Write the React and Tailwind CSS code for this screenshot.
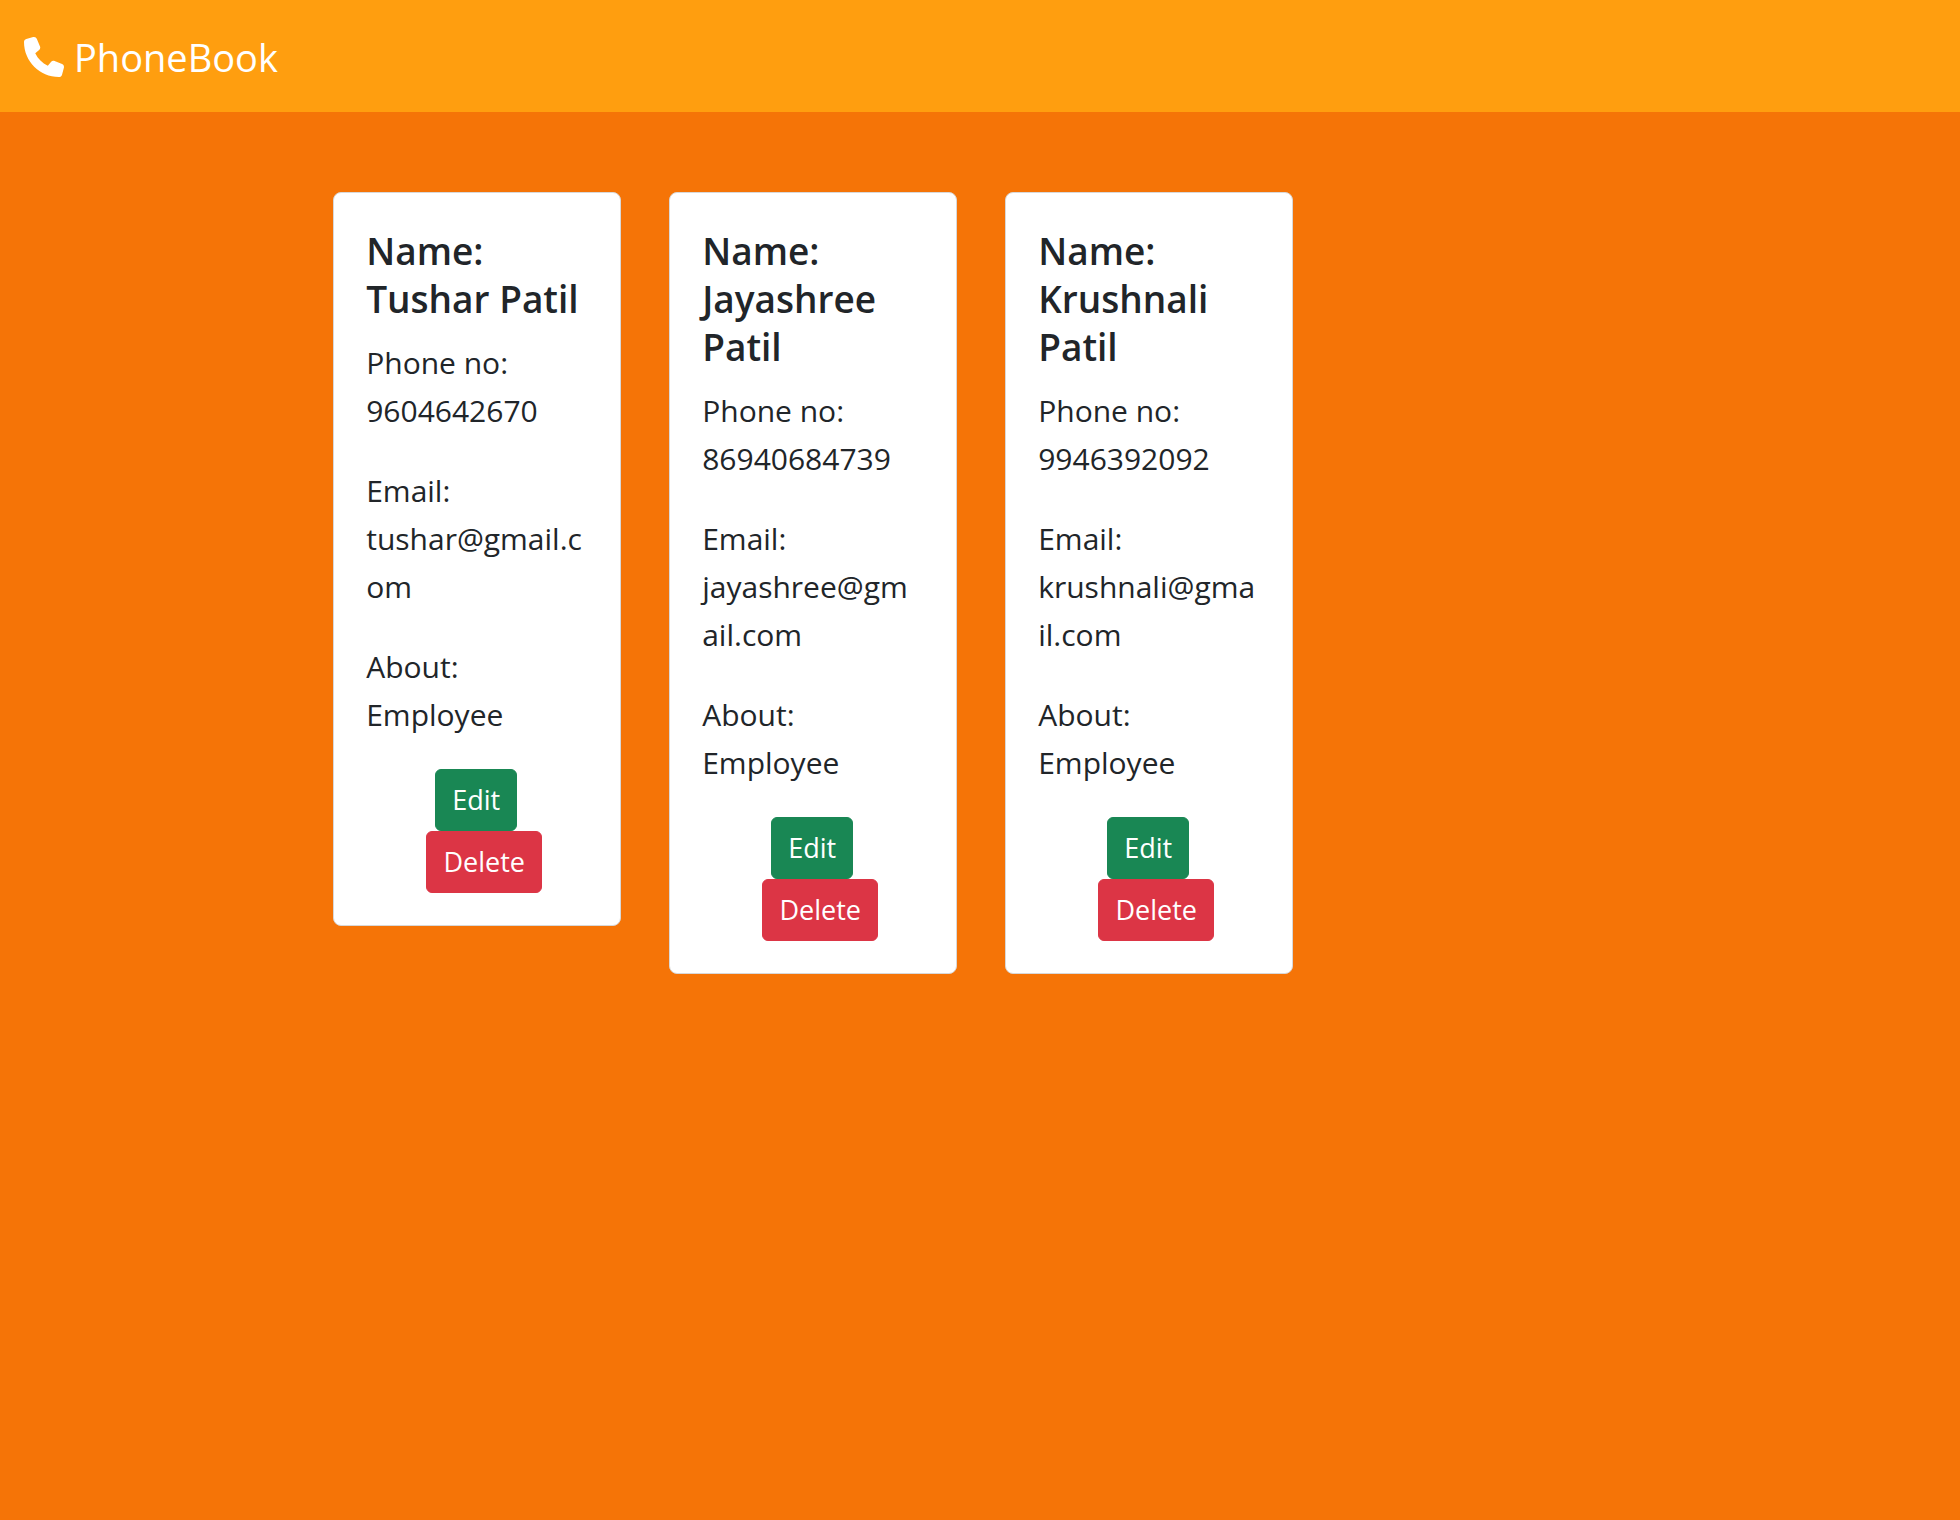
import { FaPhone } from "react-icons/fa6";

const contacts = [
  { name: "Tushar Patil", phone: "9604642670", email: "tushar@gmail.com", about: "Employee" },
  { name: "Jayashree Patil", phone: "86940684739", email: "jayashree@gmail.com", about: "Employee" },
  { name: "Krushnali Patil", phone: "9946392092", email: "krushnali@gmail.com", about: "Employee" },
];

function ContactCard({ name, phone, email, about }) {
  return (
    <article className="w-72 rounded-lg border border-[#d8d8d8] bg-white px-8 pt-[34px] pb-8 text-[#212529]">
      <h2 className="mb-4 text-[37px] leading-12 font-semibold">
        Name: <br />
        {name}
      </h2>
      <div className="space-y-8 text-[30px] leading-12 wrap-anywhere">
        <p>
          Phone no: <br />
          {phone}
        </p>
        <p>
          Email: <br />
          {email}
        </p>
        <p>
          About: <br />
          {about}
        </p>
      </div>
      <div className="mt-[30px] mr-0.5 flex flex-col items-center text-[27px] leading-[42px] text-white">
        <button type="button" className="rounded-md border border-[#198754] bg-[#198754] px-4 py-[9px]">
          Edit
        </button>
        <button type="button" className="ml-4 rounded-md border border-[#dc3545] bg-[#dc3545] px-4 py-[9px]">
          Delete
        </button>
      </div>
    </article>
  );
}

export default function App() {
  return (
    <div className="min-h-screen bg-[#f57407] font-['Open_Sans','Noto_Sans',sans-serif]">
      <nav className="flex h-28 items-center bg-[#ff9e0f] px-6 pt-0.5">
        <a href="#" className="flex items-center gap-2.5 text-[38px] leading-[60px] text-white">
          <FaPhone className="size-10" aria-hidden="true" />
          PhoneBook
        </a>
      </nav>
      <main className="flex flex-wrap items-start gap-12 pt-20 pl-[17%]">
        {contacts.map((c) => (
          <ContactCard key={c.email} {...c} />
        ))}
      </main>
    </div>
  );
}
